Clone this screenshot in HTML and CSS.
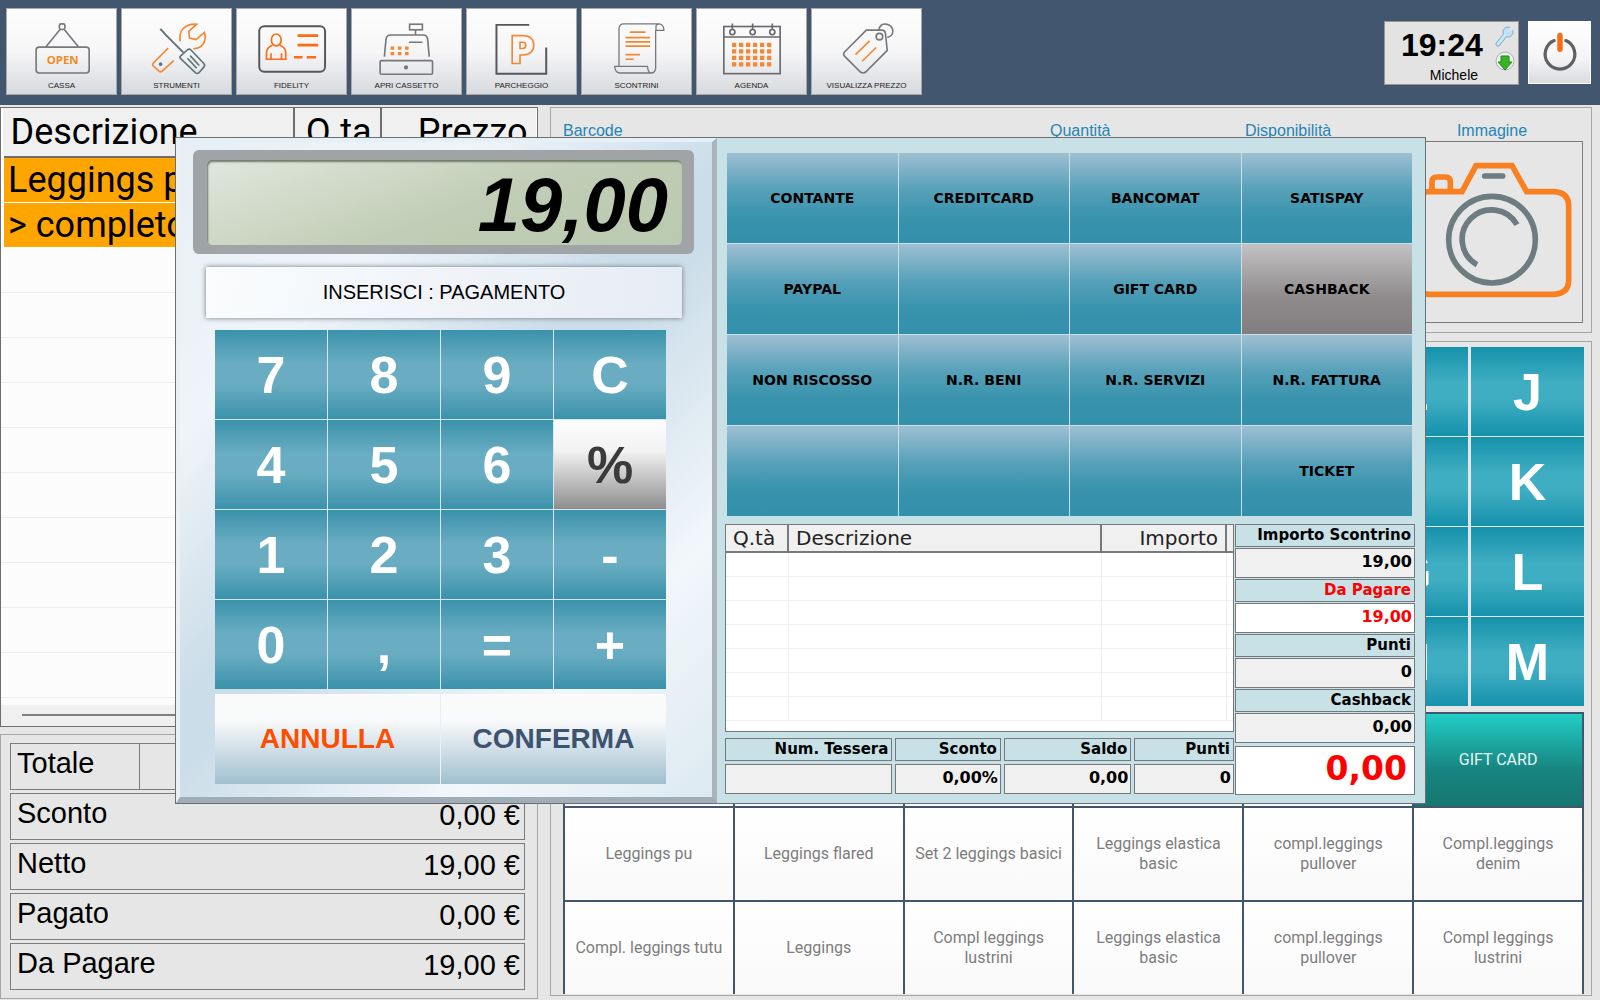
FILE: index.html
```html
<!DOCTYPE html>
<html lang="it">
<head>
<meta charset="utf-8">
<title>Cassa</title>
<link rel="stylesheet" href="styles.css">
</head>
<body>
<header class="topbar">
  <nav class="tools">
    <button class="tool" type="button">
      <svg viewBox="18 26 333 210" fill="none" stroke="#77787c" stroke-width="5"><rect x="178" y="65" width="17" height="17" rx="5"/><path d="M180 82 137 135M193 82l43 53"/><rect x="107" y="136" width="162" height="79" rx="9"/><text class="open-sign" x="188" y="189" text-anchor="middle" stroke="none">OPEN</text></svg>
      <span>CASSA</span>
    </button>
    <button class="tool" type="button">
      <svg viewBox="363 26 333 210" fill="none" stroke="#5f7378" stroke-width="5"><g stroke="#f58634"><path d="M541 118c-6-31 12-54 50-52l-24 22 2 20 20 5 26-22c8 28-8 50-34 50"/><path d="M504 139l-46 46q-3 4 0 8l18 16q5 4 10 0l35-32"/></g><circle cx="481" cy="188" r="3"/><path d="M480 80l16 18 54 54" stroke-width="6"/><path d="M541 164l22-20q5-4 10 0l40 42q5 6 0 11l-15 17q-5 5-11 0l-44-42q-5-4-2-8z"/><path d="M571 162l28 30M563 170l28 30"/></svg>
      <span>STRUMENTI</span>
    </button>
    <button class="tool" type="button">
      <svg viewBox="708 26 333 210" fill="none" stroke="#ff6a13" stroke-width="5"><rect x="776" y="72" width="201" height="139" rx="15" stroke="#57565b" stroke-width="6"/><ellipse cx="828" cy="114" rx="15" ry="18"/><path d="M816 130c-12 4-18 14-18 26v17h59v-17c0-12-6-22-18-26M812 173v-18M844 173v-18"/><path d="M893 101h63M893 130h63" stroke-width="8"/><path d="M882 167h26M921 167h28" stroke-width="8"/></svg>
      <span>FIDELITY</span>
    </button>
    <button class="tool" type="button">
      <svg viewBox="1053 26 333 210" fill="none" stroke="#77787c" stroke-width="5"><rect x="1229" y="66" width="39" height="17"/><path d="M1247 83v16M1152 165l5-54q2-12 14-12h99q12 0 14 12l5 54M1227 121h41"/><rect x="1139" y="177" width="160" height="42" rx="4"/><circle cx="1218" cy="198" r="4" fill="#77787c"/><path d="M1171 139h56M1171 156h56" stroke="#f58634" stroke-width="10" stroke-dasharray="11 11"/></svg>
      <span>APRI CASSETTO</span>
    </button>
    <button class="tool" type="button">
      <svg viewBox="18 26 333 210" fill="none" stroke="#57565b" stroke-width="6"><path d="M208 68H108v149h152v-80"/><path d="M156 101h34c21 0 32 12 32 29s-12 30-32 30h-10v26h-24zM180 121v19h8c13 0 13-19 0-19z" stroke="#f58634" stroke-width="5"/></svg>
      <span>PARCHEGGIO</span>
    </button>
    <button class="tool" type="button">
      <svg viewBox="363 26 333 210" fill="none" stroke="#77787c" stroke-width="4"><path d="M476 194V80q0-15 15-15h108q14 2 14 20h-24V74q0-9 10-9M588 84v116q-2 15-14 15h-96q-14-2-15-20h100q2 20 12 20"/><g stroke="#f58634" stroke-width="5"><path d="M509 90h48M496 107h75M496 120h75M496 133h75M496 159h44M496 173h25"/></g></svg>
      <span>SCONTRINI</span>
    </button>
    <button class="tool" type="button">
      <svg viewBox="708 26 333 210" fill="none" stroke="#68696e" stroke-width="5"><rect x="790" y="73" width="172" height="144"/><path d="M790 105h172"/><path d="M816 64v20M878 64v20M938 64v20"/><g stroke-width="5"><circle cx="816" cy="90" r="8"/><circle cx="878" cy="90" r="8"/><circle cx="938" cy="90" r="8"/></g><path d="M815 129h124M815 149h124M815 169h124M815 189h124" stroke="#f58634" stroke-width="13" stroke-dasharray="13 8.400"/></svg>
      <span>AGENDA</span>
    </button>
    <button class="tool" type="button">
      <svg viewBox="1053 26 333 210" fill="none" stroke="#77787c" stroke-width="5"><path d="M1219 84l48 0q8 0 10 8l6 54-66 66q-8 6-16 0l-48-48q-7-7 0-14z"/><circle cx="1259" cy="104" r="10"/><path d="M1258 84c0-28 42-22 42 3 0 10-7 18-17 19"/><path d="M1229 117l-43 42M1249 137l-43 42" stroke="#f58634"/></svg>
      <span>VISUALIZZA PREZZO</span>
    </button>
  </nav>
  <div class="status">
    <div class="clock">
      <div class="clock-text">
        <time>19:24</time>
        <span>Michele</span>
      </div>
      <div class="clock-icons">
        <svg width="20" height="22" viewBox="0 0 20 22"><path d="M3 19 11 9" stroke="#7fb0cc" stroke-width="5" stroke-linecap="round"/><circle cx="13" cy="7" r="5" fill="#bfe0f2" stroke="#7fb0cc"/><path d="M3 19 11 9" stroke="#c9e6f5" stroke-width="3" stroke-linecap="round"/><path d="M13 7l3-6 4 3z" fill="#e3e3e3"/></svg>
        <svg width="20" height="20" viewBox="0 0 20 20"><circle cx="10" cy="10" r="9" fill="#eef2ee" stroke="#a9aeb0"/><path d="M6 5h8v6h3l-7 8-7-8h3z" fill="#38b527" stroke="#208a18"/></svg>
      </div>
    </div>
    <button class="power" type="button" aria-label="Esci">
      <svg viewBox="986 64 189 188" fill="none" stroke-width="10"><path d="M1064 121a46 46 0 1 0 36 0" stroke="#5f6064" stroke-linecap="round"/><path d="M1082 105v43" stroke="#ff6a13" stroke-width="17" stroke-linecap="round"/></svg>
    </button>
  </div>
</header>

<main class="workspace">
  <div class="column">
    <section class="receipt">
      <table>
        <colgroup><col class="c-desc"><col class="c-count"><col></colgroup>
        <thead><tr><th>Descrizione</th><th class="num">Q.ta</th><th class="num">Prezzo</th></tr></thead>
        <tbody>
          <tr><td colspan="3">Leggings pu</td></tr>
          <tr><td colspan="3">&gt; completo</td></tr>
        </tbody>
      </table>
      <div class="receipt-lines"></div>
      <div class="receipt-scroll"><span></span></div>
    </section>
    <dl class="totals">
      <div class="total-split"><dt>Totale</dt><dd></dd></div>
      <div><dt>Sconto</dt><dd>0,00 €</dd></div>
      <div><dt>Netto</dt><dd>19,00 €</dd></div>
      <div><dt>Pagato</dt><dd>0,00 €</dd></div>
      <div><dt>Da Pagare</dt><dd>19,00 €</dd></div>
    </dl>
  </div>

  <div class="column">
    <section class="article">
      <span>Barcode</span>
      <span>Quantità</span>
      <span>Disponibilità</span>
      <figure>
        <figcaption>Immagine</figcaption>
        <div class="photo">
          <svg viewBox="606 426 540 540" fill="none" stroke="#f98020" stroke-width="17"><path d="M786 575h-98q-42 2-42 44v222q0 40 42 42h374q44-2 44-42V619q0-42-44-44h-82l-44-78H828z"/><path d="M696 571v-25q0-15 15-15h26q14 0 14 15v25"/><path d="M854 528h54" stroke="#6d7c80" stroke-linecap="round"/><g stroke="#6d7c80"><circle cx="876" cy="719" r="130"/><path d="M951 674a88 88 0 1 0-120 120"/></g></svg>
        </div>
      </figure>
    </section>

    <section class="catalog">
      <div class="letters">
        <button type="button">E</button><button type="button">J</button>
        <button type="button">F</button><button type="button">K</button>
        <button type="button">G</button><button type="button">L</button>
        <button type="button">H</button><button type="button">M</button>
      </div>
      <div class="products">
        <button type="button"></button><button type="button"></button><button type="button"></button><button type="button"></button><button type="button"></button>
        <button class="gift" type="button">GIFT CARD</button>
        <button type="button">Leggings pu</button>
        <button type="button">Leggings flared</button>
        <button type="button">Set 2 leggings basici</button>
        <button type="button">Leggings elastica basic</button>
        <button type="button">compl.leggings pullover</button>
        <button type="button">Compl.leggings denim</button>
        <button type="button">Compl. leggings tutu</button>
        <button type="button">Leggings</button>
        <button type="button">Compl leggings lustrini</button>
        <button type="button">Leggings elastica basic</button>
        <button type="button">compl.leggings pullover</button>
        <button type="button">Compl leggings lustrini</button>
      </div>
    </section>
  </div>
</main>

<div class="payment" role="dialog" aria-label="Pagamento">
  <section class="calculator">
    <div class="bezel"><output class="lcd">19,00</output></div>
    <p class="prompt">INSERISCI : PAGAMENTO</p>
    <div class="keypad">
      <button type="button">7</button><button type="button">8</button><button type="button">9</button><button type="button">C</button>
      <button type="button">4</button><button type="button">5</button><button type="button">6</button><button class="percent" type="button">%</button>
      <button type="button">1</button><button type="button">2</button><button type="button">3</button><button type="button">-</button>
      <button type="button">0</button><button type="button">,</button><button type="button">=</button><button type="button">+</button>
    </div>
    <div class="actions">
      <button class="cancel" type="button">ANNULLA</button>
      <button type="button">CONFERMA</button>
    </div>
  </section>

  <section class="tender">
    <div class="methods">
      <button type="button">CONTANTE</button><button type="button">CREDITCARD</button><button type="button">BANCOMAT</button><button type="button">SATISPAY</button>
      <button type="button">PAYPAL</button><button type="button"></button><button type="button">GIFT CARD</button><button class="muted" type="button">CASHBACK</button>
      <button type="button">NON RISCOSSO</button><button type="button">N.R. BENI</button><button type="button">N.R. SERVIZI</button><button type="button">N.R. FATTURA</button>
      <button type="button"></button><button type="button"></button><button type="button"></button><button type="button">TICKET</button>
    </div>
    <div class="details">
      <div class="details-main">
        <div class="lines">
          <table>
            <colgroup><col class="c-qty"><col><col class="c-amount"><col class="c-end"></colgroup>
            <thead><tr><th>Q.tà</th><th>Descrizione</th><th class="num">Importo</th><th></th></tr></thead>
            <tbody>
              <tr><td></td><td></td><td></td><td></td></tr>
              <tr><td></td><td></td><td></td><td></td></tr>
              <tr><td></td><td></td><td></td><td></td></tr>
              <tr><td></td><td></td><td></td><td></td></tr>
              <tr><td></td><td></td><td></td><td></td></tr>
              <tr><td></td><td></td><td></td><td></td></tr>
              <tr><td></td><td></td><td></td><td></td></tr>
            </tbody>
          </table>
        </div>
        <div class="card">
          <div class="field"><label for="tessera">Num. Tessera</label><input id="tessera" readonly value=""></div>
          <div class="field"><label for="sconto">Sconto</label><input id="sconto" readonly value="0,00%"></div>
          <div class="field"><label for="saldo">Saldo</label><input id="saldo" readonly value="0,00"></div>
          <div class="field"><label for="punti-tessera">Punti</label><input id="punti-tessera" readonly value="0"></div>
        </div>
      </div>
      <div class="summary">
        <label for="importo">Importo Scontrino</label><input id="importo" readonly value="19,00">
        <label class="due" for="dapagare">Da Pagare</label><input class="due" id="dapagare" readonly value="19,00">
        <label for="punti">Punti</label><input id="punti" readonly value="0">
        <label for="cashback">Cashback</label><input id="cashback" readonly value="0,00">
        <input class="grand" aria-label="Totale pagato" readonly value="0,00">
      </div>
    </div>
  </section>
</div>
</body>
</html>
```
FILE: styles.css
```css
* { box-sizing: border-box; }
body {
  margin: 0;
  min-height: 100vh;
  display: flex;
  flex-direction: column;
  background: #e6e6e6;
  color: #000;
  font-family: "Liberation Sans", Arial, sans-serif;
}
button { margin: 0; padding: 0; border: 0; font: inherit; color: inherit; cursor: pointer; }
svg { display: block; }
table { width: 100%; border-collapse: collapse; table-layout: fixed; }

/* Top bar */
.topbar {
  height: 105px;
  display: flex;
  justify-content: space-between;
  align-items: flex-start;
  padding: 8px 9px 0 6px;
  background: #42566f;
}
.tools { display: flex; gap: 4px; }
.tool {
  width: 111px;
  height: 87px;
  border: 1px solid #aaa9a6;
  background: linear-gradient(#fdfdfd 0%, #f6f6f7 50%, #d6d9de 100%);
  font-size: 8px;
  line-height: 12px;
  color: #222;
  white-space: nowrap;
}
.tool svg { width: 100%; height: 69px; }
.tool span { display: block; }
.open-sign { font: bold 35px "Open Sans", sans-serif; fill: #f28a1e; }
.status { display: flex; gap: 9px; padding-top: 13px; }
.clock {
  width: 135px;
  height: 64px;
  display: flex;
  justify-content: space-between;
  padding: 1px 3px 1px 16px;
  border: 1px solid #9c9890;
  background: #e3e3e3;
}
.clock-text { display: flex; flex-direction: column; align-items: center; font-size: 14px; line-height: 16px; }
.clock-text time { font: bold 32px/44px "Liberation Sans", Arial, sans-serif; }
.clock-text span { padding-left: 24px; }
.clock-icons { display: flex; flex-direction: column; gap: 4px; padding-top: 2px; }
.power {
  width: 63px;
  height: 63px;
  border: 1px solid #fff;
  background: linear-gradient(#fff, #f4f4f5 60%, #d9dce0);
}
.power svg { width: 100%; height: 100%; }

/* Workspace behind the payment window */
.workspace {
  flex: 1;
  display: grid;
  grid-template-columns: 538fr 1042fr;
  gap: 12px;
  padding: 2px 8px 1px 0;
}
.column { display: flex; flex-direction: column; }
.receipt {
  flex: 1;
  display: flex;
  flex-direction: column;
  border: 1px solid #6e6e6e;
  background: #fff;
  font-family: Roboto, sans-serif;
  font-size: 36px;
}
.c-desc { width: 291px; }
.c-count { width: 87px; }
.receipt th {
  height: 49px;
  padding: 0 8px;
  border: solid #6e6e6e;
  border-width: 0 0 2px 2px;
  background: #f0f0f0;
  font-weight: 400;
  line-height: 47px;
  text-align: left;
}
.receipt th:first-child { border-left: 0; }
.receipt th.num { text-align: right; }
.receipt td {
  height: 45px;
  padding: 0 4px;
  border: solid #fff;
  border-width: 1px 3px;
  background: #ffa500;
  line-height: 44px;
}
.receipt-lines {
  flex: 1;
  background: repeating-linear-gradient(#fcfcfc 0 44px, #ececec 44px 45px);
}
.receipt-scroll { height: 21px; padding: 9px 21px 0; background: #f0f0f0; }
.receipt-scroll span { display: block; height: 2px; background: #808080; }

.totals {
  display: grid;
  gap: 3px;
  margin: 7px 0 0;
  padding: 8px 12px 8px 9px;
  border: 1px solid #a6a6a6;
  font-size: 29px;
  line-height: 36px;
}
.totals > div {
  height: 47px;
  display: flex;
  justify-content: space-between;
  padding: 1px 4px 0 6px;
  border: 1px solid #7c7c7c;
}
.totals dd { margin: 0; padding-top: 2px; }
.totals .total-split { padding-top: 0; }
.total-split dt { width: 123px; padding-top: 1px; border-right: 1px solid #7c7c7c; }

.article {
  display: grid;
  grid-template-columns: 1fr 195px 156px 182px;
  padding: 13px 8px 9px 12px;
  border: 1px solid #a6a6a6;
  color: #1f85b5;
  font-size: 16px;
  line-height: 20px;
}
.article figure { margin: 0; text-align: center; }
.photo { border: 1px solid #7c7c7c; }

.catalog {
  flex: 1;
  margin: 8px 0 3px;
  padding: 5px 7px 0 12px;
  border: 1px solid #a6a6a6;
}
.letters {
  display: grid;
  grid-template-columns: 113px 113px;
  grid-auto-rows: 89px;
  gap: 1px 3px;
  justify-content: end;
  margin-bottom: 6px;
}
.letters button {
  background: linear-gradient(#1592ab, #3fadc2 40%, #3fadc2 60%, #1592ab);
  color: #fff;
  font-size: 52px;
  font-weight: 700;
}
.products {
  display: grid;
  grid-template-columns: repeat(6, 1fr);
  grid-auto-rows: 94px;
  border-right: 2px solid #42566f;
}
.products button {
  padding: 0 8px;
  border: solid #42566f;
  border-width: 2px 0 0 2px;
  background: linear-gradient(#fff, #f9f9f9);
  color: #7d7d7d;
  font: 16px/20px Roboto, sans-serif;
}
.products .gift {
  background: linear-gradient(#22cec7, #178580 60%, #167770);
  color: #e6f5f2;
}

/* Payment window */
.payment {
  position: absolute;
  top: 137px;
  left: 175px;
  right: 174px;
  display: grid;
  grid-template-columns: 541fr 708fr;
  border: 1px solid #6b6f72;
  background: #c8e1e6;
}
.calculator {
  padding: 8px 18px 13px 13px;
  border: solid;
  border-width: 4px 5px 6px 4px;
  border-color: #e6f1f7 #a8b3bb #9fadb6 #e9f1f6;
  background: linear-gradient(135deg, #e6eff6 0%, #eff4f9 25%, #cbdde9 47%, #cbdde9 53%, #f2f7fb 78%, #dce9f1 100%);
}
.bezel { padding: 10px 12px 9px 14px; border-radius: 6px; background: #a0a4a6; }
.lcd {
  height: 85px;
  display: block;
  padding: 0 14px;
  border-radius: 5px;
  background: linear-gradient(160deg, #e0e7dc, #c1cdb6 55%, #b9cab0);
  box-shadow: inset 1px 2px 2px #6f7b6c;
  font: italic bold 76px/90px "Liberation Sans", Arial, sans-serif;
  text-align: right;
}
.prompt {
  margin: 13px 12px 12px 13px;
  background: linear-gradient(100deg, #fafcfd, #e6ecf5);
  box-shadow: 0 0 5px #6c757c;
  font-size: 20px;
  line-height: 51px;
  text-align: center;
}
.keypad, .actions { display: grid; gap: 1px; margin: 0 28px 0 22px; }
.keypad { grid-template-columns: repeat(4, 1fr); grid-auto-rows: 89px; background: #d4e8ee; }
.keypad button {
  background: linear-gradient(#3a92ab, #6aadc2 38%, #6aadc2 60%, #3a92ab);
  color: #fff;
  font-size: 52px;
  font-weight: 700;
}
.keypad .percent { background: linear-gradient(#fdfdfd, #f2f2f2 35%, #8e8e8e); color: #3a3a3a; }
.actions { grid-template-columns: 1fr 1fr; grid-auto-rows: 90px; margin-top: 5px; }
.actions button {
  background: linear-gradient(#fbfbfb 0%, #f8f9fa 30%, #a0bfd0 100%);
  color: #3d536f;
  font-size: 28px;
  font-weight: 700;
}
.actions .cancel { color: #ff4d00; }

.tender {
  display: flex;
  flex-direction: column;
  gap: 8px;
  padding: 15px 10px 8px 8px;
  font-family: Verdana, "DejaVu Sans", sans-serif;
}
.methods {
  display: grid;
  grid-template-columns: repeat(4, 1fr);
  grid-auto-rows: 90px;
  gap: 1px;
  margin: 0 3px 0 2px;
}
.methods button {
  background: linear-gradient(#9fbfd2, #57a1b9 40%, #3893ad 72%, #3390ab);
  font-size: 14px;
  font-weight: 700;
}
.methods .muted { background: linear-gradient(#c3c1c3, #8f8b8d 60%, #827e80); }
.details { display: grid; grid-template-columns: 1fr 180px; gap: 1px; }
.details-main { display: flex; flex-direction: column; gap: 6px; }
.lines { height: 208px; border: 1px solid #76797b; background: #fff; overflow: hidden; }
.c-qty { width: 62px; }
.c-amount { width: 125px; }
.c-end { width: 7px; }
.lines th {
  height: 27px;
  padding: 0 7px;
  border: solid #76797b;
  border-width: 0 0 2px 2px;
  background: #f0f0f0;
  color: #222;
  font-size: 20px;
  font-weight: 400;
  line-height: 26px;
  text-align: left;
}
.lines th:first-child, .lines td:first-child { border-left: 0; }
.lines th:last-child { padding: 0; }
.lines th.num { text-align: right; }
.lines td { height: 24px; padding: 0; border: solid #efefef; border-width: 0 0 1px 1px; }
.card { display: grid; grid-template-columns: 168fr 106fr 128fr 100fr; gap: 3px; }
.field { display: grid; gap: 3px; }
.tender label {
  display: block;
  height: 23px;
  padding-right: 3px;
  border: 1px solid #76797b;
  font-size: 15px;
  font-weight: 700;
  line-height: 20px;
  text-align: right;
}
.tender input {
  width: 100%;
  min-width: 0;
  height: 30px;
  padding: 0 2px 4px 0;
  border: 1px solid #76797b;
  border-radius: 0;
  background: #f0f0f0;
  color: #000;
  font: bold 16px/18px Verdana, "DejaVu Sans", sans-serif;
  text-align: right;
}
.summary { display: grid; gap: 1px; align-content: start; }
.tender .due { color: #f00; }
.tender input.due { background: #fff; }
.tender input.grand {
  height: 49px;
  margin-top: 2px;
  padding-right: 7px;
  background: #fff;
  color: #f00;
  font-size: 33px;
  line-height: 40px;
}
```
